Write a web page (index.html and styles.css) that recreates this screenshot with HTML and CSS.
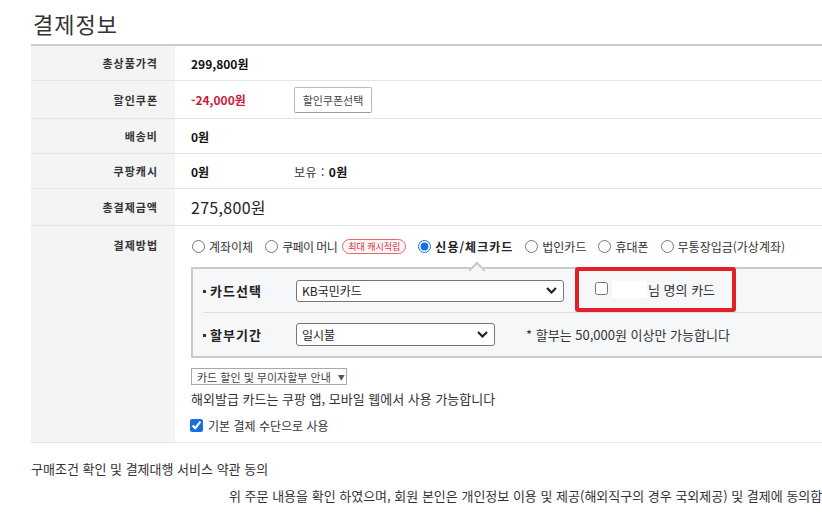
FILE: index.html
```html
<!DOCTYPE html>
<html lang="ko">
<head>
<meta charset="utf-8">
<title>결제정보</title>
<link rel="stylesheet" href="styles.css">
</head>
<body>
<div class="page">
  <h2 class="title">결제정보</h2>
  <div class="table">
    <div class="row r1">
      <div class="th">총상품가격</div>
      <div class="td"><b class="num">299,800원</b></div>
    </div>
    <div class="row r2">
      <div class="th">할인쿠폰</div>
      <div class="td"><b class="num amt red">-24,000원</b><button class="btn">할인쿠폰선택</button></div>
    </div>
    <div class="row r3">
      <div class="th">배송비</div>
      <div class="td"><b class="num">0원</b></div>
    </div>
    <div class="row r4">
      <div class="th">쿠팡캐시</div>
      <div class="td"><b class="num amt">0원</b><span class="own">보유 : <b class="num">0원</b></span></div>
    </div>
    <div class="row r5">
      <div class="th">총결제금액</div>
      <div class="td"><span class="total">275,800원</span></div>
    </div>
    <div class="row r6">
      <div class="th top">결제방법</div>
      <div class="td block">
        <div class="methods">
          <label class="opt"><input type="radio" name="pay">계좌이체</label>
          <label class="opt"><input type="radio" name="pay"><span class="tight">쿠페이 머니</span><span class="badge">최대 캐시적립</span></label>
          <label class="opt sel"><input type="radio" name="pay" checked>신용/체크카드</label>
          <label class="opt"><input type="radio" name="pay">법인카드</label>
          <label class="opt"><input type="radio" name="pay">휴대폰</label>
          <label class="opt"><input type="radio" name="pay">무통장입금(가상계좌)</label>
        </div>
        <div class="cardbox">
          <div class="crow crow1">
            <div class="clabel">카드선택</div>
            <div class="fsel fsel1"><span>KB국민카드</span><svg width="11" height="7" viewBox="0 0 11 7"><path d="M1 1 L5.5 5.5 L10 1" fill="none" stroke="#222" stroke-width="2.2"/></svg></div>
            <div class="owner"><input type="checkbox"><span class="mask"></span><span>님 명의 카드</span></div>
          </div>
          <div class="crow crow2">
            <div class="clabel">할부기간</div>
            <div class="fsel fsel2"><span>일시불</span><svg width="11" height="7" viewBox="0 0 11 7"><path d="M1 1 L5.5 5.5 L10 1" fill="none" stroke="#222" stroke-width="2.2"/></svg></div>
            <div class="inote">* 할부는 50,000원 이상만 가능합니다</div>
          </div>
        </div>
        <div class="dd">카드 할인 및 무이자할부 안내<span class="tri">▼</span></div>
        <div class="note2">해외발급 카드는 쿠팡 앱, 모바일 웹에서 사용 가능합니다</div>
        <label class="chk"><input type="checkbox" checked>기본 결제 수단으로 사용</label>
      </div>
    </div>
  </div>
  <div class="agree">구매조건 확인 및 결제대행 서비스 약관 동의</div>
  <div class="agree2">위 주문 내용을 확인 하였으며, 회원 본인은 개인정보 이용 및 제공(해외직구의 경우 국외제공) 및 결제에 동의합니다.</div>
</div>
</body>
</html>
```
FILE: styles.css
```css
html, body {
  margin: 0;
  overflow: hidden;
}
body {
  font-family: "Noto Sans CJK KR", "Noto Sans", sans-serif;
  font-size: 12px;
  color: #333;
  background: #fff;
}
.page {
  width: 1100px;
  padding-left: 31px;
}
.title {
  margin: 0;
  height: 42px;
  padding-top: 2px;
  padding-left: 2px;
  font-size: 22px;
  letter-spacing: 1px;
  line-height: 42px;
  font-weight: normal;
  color: #333;
}
.table {
  width: 1000px;
  border-top: 2px solid #cccccc;
}
.row {
  display: flex;
  border-bottom: 1px solid #e4e4e4;
}
.r1 { height: 34px; }
.r2 { height: 37px; }
.r3 { height: 34px; }
.r4 { height: 34px; }
.r5 { height: 36px; }
.r6 { height: 216px; }
.th {
  flex: none;
  width: 144px;
  box-sizing: border-box;
  padding-right: 17px;
  background: #f4f4f4;
  display: flex;
  align-items: center;
  justify-content: flex-end;
  font-size: 11px;
  letter-spacing: 1px;
  font-weight: bold;
  color: #333;
}
.th.top {
  align-items: flex-start;
  padding-top: 11px;
  line-height: 16px;
}
.td {
  flex: 1;
  padding-left: 16px;
  display: flex;
  align-items: center;
}
.td.block {
  display: block;
  padding-top: 11px;
}
.num {
  font-weight: bold;
  color: #111;
}
.amt {
  display: inline-block;
  width: 103px;
}
.red { color: #cc1a3c; }
.btn {
  height: 26px;
  width: 78px;
  padding: 0;
  border: 1px solid #b9b9b9;
  border-bottom-color: #9e9e9e;
  border-radius: 2px;
  background: #fff;
  font-family: inherit;
  font-size: 11px;
  color: #444;
}
.own {
  color: #333;
  letter-spacing: 0.5px;
}
.total {
  font-size: 16px;
  letter-spacing: 0.3px;
  color: #222;
}
.methods {
  display: flex;
  align-items: center;
  height: 18px;
  margin-left: 1px;
  white-space: nowrap;
}
.opt {
  display: inline-flex;
  align-items: center;
  margin-right: 12px;
  color: #333;
}
.opt input {
  margin: 0 4px 0 0;
  width: 13px;
  height: 13px;
  accent-color: #1a6fe0;
}
.opt.sel {
  font-weight: bold;
  letter-spacing: 1px;
  color: #222;
}
.tight { letter-spacing: -0.6px; }
.badge {
  margin-left: 5px;
  height: 15px;
  line-height: 13px;
  box-sizing: border-box;
  padding: 0 5px;
  border: 1px solid #e06a74;
  border-radius: 8px;
  background: #fff5f5;
  color: #d23445;
  font-size: 9px;
}
.cardbox {
  position: relative;
  margin-top: 12px;
  height: 87px;
  padding-left: 10px;
  border: 2px solid #c7cacf;
  background: #f6f7f9;
}
.cardbox::before {
  content: "";
  position: absolute;
  top: -5px;
  left: 278px;
  width: 10px;
  height: 10px;
  background: #f6f7f9;
  border-left: 2px solid #c7cacf;
  border-top: 2px solid #c7cacf;
  transform: rotate(45deg);
}
.crow {
  display: flex;
  align-items: center;
}
.crow1 {
  height: 43px;
  border-bottom: 1px solid #dcdee2;
}
.crow2 { height: 42px; }
.clabel {
  flex: none;
  width: 93px;
  display: flex;
  align-items: center;
  font-size: 13px;
  letter-spacing: 1px;
  font-weight: bold;
  color: #222;
}
.clabel::before {
  content: "";
  width: 3px;
  height: 3px;
  margin: 2px 4px 0 0;
  background: #333;
}
.fsel {
  flex: none;
  height: 22px;
  box-sizing: border-box;
  padding: 0 6px 0 5px;
  border: 1px solid #767676;
  border-radius: 3px;
  background: #fff;
  display: flex;
  align-items: center;
  justify-content: space-between;
  font-size: 12px;
  color: #222;
}
.fsel1 { width: 268px; }
.fsel2 { width: 199px; height: 23px; }
.owner {
  position: relative;
  align-self: flex-start;
  margin-top: -2px;
  margin-left: 11px;
  width: 161px;
  height: 45px;
  box-sizing: border-box;
  padding-left: 16px;
  border: 4px solid #e3202a;
  border-radius: 3px;
  display: flex;
  align-items: center;
  font-size: 13px;
  color: #333;
}
.owner input {
  margin: -2px 0 0 0;
  width: 13px;
  height: 13px;
}
.mask {
  width: 35px;
  height: 17px;
  margin: 0 1px 0 4px;
  background: #fff;
}
.inote {
  margin-left: 31px;
  font-size: 13px;
  color: #333;
}
.dd {
  margin-top: 10px;
  width: 156px;
  height: 17px;
  box-sizing: border-box;
  padding-left: 5px;
  border: 1px solid #a9a9a9;
  background: #fff;
  display: flex;
  align-items: center;
  font-size: 11px;
  color: #444;
}
.tri {
  margin-left: 7px;
  font-size: 7px;
  color: #555;
}
.note2 {
  margin-top: 5px;
  line-height: 18px;
  font-size: 13px;
  color: #333;
}
.chk {
  margin-top: 8px;
  height: 18px;
  display: flex;
  align-items: center;
  color: #333;
}
.chk input {
  margin: 0 5px 0 -1px;
  width: 13px;
  height: 13px;
  accent-color: #1a6fe0;
}
.agree {
  margin-top: 17px;
  line-height: 18px;
  font-size: 13px;
  color: #333;
}
.agree2 {
  margin-top: 9px;
  padding-left: 198px;
  line-height: 18px;
  font-size: 13px;
  white-space: nowrap;
  color: #333;
}
```
